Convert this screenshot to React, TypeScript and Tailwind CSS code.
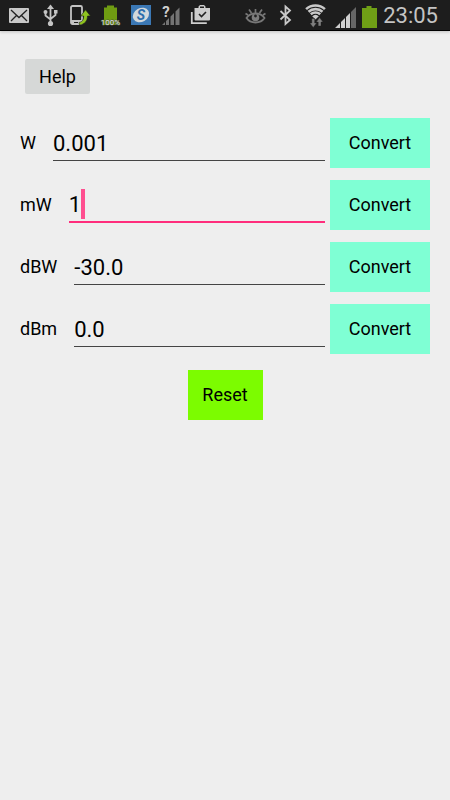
import { useState } from "react";
import type { ReactNode } from "react";

type Unit = "W" | "mW" | "dBW" | "dBm";

const UNITS: Unit[] = ["W", "mW", "dBW", "dBm"];

const EMPTY: Record<Unit, string> = { W: "", mW: "", dBW: "", dBm: "" };

function toWatts(unit: Unit, value: number) {
  if (unit === "W") return value;
  if (unit === "mW") return value / 1000;
  if (unit === "dBW") return 10 ** (value / 10);
  return 10 ** ((value - 30) / 10);
}

function format(value: number) {
  const rounded = Number(value.toPrecision(8));
  return Number.isInteger(rounded) ? rounded.toFixed(1) : String(rounded);
}

function StatusIcon({ label, children }: { label: string; children: ReactNode }) {
  return (
    <svg
      role="img"
      aria-label={label}
      viewBox="0 0 20 30"
      className="h-[30px] w-5 shrink-0 overflow-visible"
    >
      {children}
    </svg>
  );
}

function StatusBar() {
  return (
    <header className="flex h-[31px] items-start justify-between border-b border-black bg-[#1d1d1d] pr-3 pl-[10px] font-[Roboto,sans-serif] shadow-[0_1px_3px_rgba(0,0,0,0.2)]">
      <div className="flex gap-[10px]">
        <StatusIcon label="Mail">
          <rect x="-1" y="8" width="20" height="15" rx="1" fill="#c9c9c9" />
          <path
            d="M1 10l8 7.5 8-7.5M1 21l5.5-5.5M17 21l-5.5-5.5"
            fill="none"
            stroke="#222"
            strokeWidth="1.3"
          />
        </StatusIcon>
        <StatusIcon label="USB">
          <path
            d="M10.5 8v15M5.5 12v3.5l5 4M15.5 12v3l-5 4"
            fill="none"
            stroke="#c4c4c4"
            strokeWidth="1.8"
          />
          <path d="M10.5 4.5l3.500 4.5h-7z" fill="#c4c4c4" />
          <circle cx="5.5" cy="12" r="2" fill="#c4c4c4" />
          <rect x="14" y="10" width="3.5" height="3.5" fill="#c4c4c4" />
          <circle cx="10.5" cy="23.5" r="2.6" fill="#c4c4c4" />
        </StatusIcon>
        <StatusIcon label="Phone update">
          <rect x="1" y="6" width="11" height="18" rx="1.5" fill="none" stroke="#c4c4c4" strokeWidth="1.8" />
          <path d="M1 21h11M1 23h3M8 23h4" stroke="#c4c4c4" strokeWidth="2" />
          <path
            d="M15.5 9.8l5 6.2h-3c0 5-3 8.5-8 9l-.5-2.5c3.5-.5 4.7-3 4.7-6.5h-3z"
            fill="#8fc31f"
            stroke="#1d1d1d"
            strokeWidth=".6"
          />
        </StatusIcon>
        <StatusIcon label="Battery full">
          <path d="M4 7.5h3V5.5h7v2h3V25H4z" fill="#6f9c12" />
          <text
            x="10.5"
            y="25"
            textAnchor="middle"
            fontSize="8"
            fill="#e8e8e8"
            stroke="#4a5a30"
            strokeWidth="1"
            paintOrder="stroke"
          >
            100%
          </text>
        </StatusIcon>
        <StatusIcon label="Sync app">
          <rect x="1" y="5" width="20" height="20" fill="#3b78b5" />
          <ellipse cx="11" cy="15" rx="8.5" ry="6.8" transform="rotate(-30 11 15)" fill="#d2d8dc" />
          <text
            x="11"
            y="20"
            textAnchor="middle"
            fontSize="14"
            fontWeight="700"
            fontStyle="italic"
            fill="#2c6eac"
          >
            S
          </text>
        </StatusIcon>
        <StatusIcon label="Second SIM signal unknown">
          <path
            d="M2 25l3-3v3zM6 25v-4l3-3v7zM10.5 25v-8.5l3.5-3.500v12zM15.5 25V11.5l4-4V25z"
            fill="#747474"
          />
          <text
            x="6"
            y="17"
            textAnchor="middle"
            fontSize="15"
            fontWeight="700"
            fill="#d0d0d0"
            stroke="#1d1d1d"
            strokeWidth="1"
            paintOrder="stroke"
          >
            ?
          </text>
        </StatusIcon>
        <StatusIcon label="Apps updated">
          <path d="M1.8 12v11.2h15" fill="none" stroke="#cecece" strokeWidth="1.8" />
          <path
            fillRule="evenodd"
            d="M4.5 8h4V6.500L10 5h4l1.5 1.500V8H20v11.5a1 1 0 0 1-1 1H5.5a1 1 0 0 1-1-1zM10 8h4V6.500h-4z"
            fill="#cecece"
          />
          <path d="M9 14l2.500 2.500 4.500-4.500" fill="none" stroke="#222" strokeWidth="1.6" />
        </StatusIcon>
      </div>

      <div className="flex gap-[10px]">
        <StatusIcon label="Smart stay">
          <path
            d="M1.500 18c4-6 14-6 18 0c-4 6-14 6-18 0z"
            fill="none"
            stroke="#777"
            strokeWidth="1.8"
          />
          <circle cx="10.5" cy="17.5" r="3.8" fill="#7d7d7d" />
          <circle cx="10.5" cy="16" r="1.4" fill="#222" />
          <path
            d="M10.5 9v4M4 9.500l2.500 3.500M17 9.500l-2.500 3.500M.5 13.500l2.500 1.500M20.5 13.500l-2.500 1.500"
            stroke="#777"
            strokeWidth="1.7"
          />
        </StatusIcon>
        <StatusIcon label="Bluetooth">
          <path
            d="M5.500 11l9.500 9-4.500 4V6.500l4.500 4-9.500 9"
            fill="none"
            stroke="#c9c9c9"
            strokeWidth="1.8"
          />
        </StatusIcon>
        <StatusIcon label="Wi-Fi">
          <path
            d="M1.100 9.100a14 14 0 0 1 18.800 0M3.500 11.800a10.400 10.400 0 0 1 14 0M5.800 14.300a7 7 0 0 1 9.400 0"
            fill="none"
            stroke="#c9c9c9"
            strokeWidth="2.6"
          />
          <path d="M7.200 16.200a4.800 4.800 0 0 1 6.600 0L10.5 19.500z" fill="#c9c9c9" />
          <path
            d="M6.800 18.500h2.900V23h2l-3.500 4.500L4.800 23h2zM13.200 26V22h-2l3.400-4.500 3.400 4.500h-2v4z"
            fill="#808080"
            stroke="#1d1d1d"
            strokeWidth=".4"
          />
        </StatusIcon>
        <div className="flex items-center gap-[6px]">
          <StatusIcon label="Mobile signal">
            <path d="M0 27l5-5v5zM6 27v-6l4-4v10zM11 27V16l4-4v15z" fill="#cfcfcf" />
            <path d="M16 27V11l5-5v21z" fill="#666" />
          </StatusIcon>
          <svg
            role="img"
            aria-label="Battery"
            viewBox="0 0 16 30"
            className="h-[30px] w-4 shrink-0"
          >
            <path d="M1 7h4.500V5h5v2H16v20H1z" fill="#6f9f16" />
          </svg>
          <time className="text-[22px] leading-8 text-[#c4c4c4]">23:05</time>
        </div>
      </div>
    </header>
  );
}

type UnitRowProps = {
  unit: Unit;
  value: string;
  active: boolean;
  onFocus: () => void;
  onChange: (value: string) => void;
  onConvert: () => void;
};

function UnitRow({ unit, value, active, onFocus, onChange, onConvert }: UnitRowProps) {
  return (
    <div className="flex items-center">
      <label htmlFor={unit} className="mr-[17px] text-lg">
        {unit}
      </label>
      <div className="relative mr-[5px] min-w-0 flex-1 text-[22px]">
        <input
          id={unit}
          type="text"
          inputMode="decimal"
          value={value}
          onFocus={onFocus}
          onChange={(e) => onChange(e.target.value)}
          className={`block h-9 w-full bg-transparent pt-px caret-transparent outline-none ${
            active ? "border-b-2 border-[#ff2d7c]" : "border-b border-[#444]"
          }`}
        />
        {active && (
          <span
            className="absolute top-[2px] h-[30px] w-1 bg-[#ff4f90]"
            style={{ left: `${value.length}ch` }}
          />
        )}
      </div>
      <button
        type="button"
        onClick={onConvert}
        className="h-[50px] w-[100px] bg-[#7fffd4] text-lg"
      >
        Convert
      </button>
    </div>
  );
}

export default function App() {
  const [values, setValues] = useState<Record<Unit, string>>({
    W: "0.001",
    mW: "1",
    dBW: "-30.0",
    dBm: "0.0",
  });
  const [active, setActive] = useState<Unit>("mW");

  function convert(unit: Unit) {
    const watts = toWatts(unit, parseFloat(values[unit]));
    if (Number.isNaN(watts)) return;
    const dbw = 10 * Math.log10(watts);
    setValues({
      W: format(watts),
      mW: format(watts * 1000),
      dBW: format(dbw),
      dBm: format(dbw + 30),
      [unit]: values[unit],
    });
  }

  return (
    <div className="min-h-screen bg-[#eee] font-[Roboto,sans-serif] text-black">
      <StatusBar />
      <main className="px-5 pt-7">
        <button
          type="button"
          className="ml-[5px] block h-[35px] w-[65px] rounded-xs bg-[#d6d8d7] text-lg"
        >
          Help
        </button>

        <div className="mt-6 flex flex-col gap-3">
          {UNITS.map((unit) => (
            <UnitRow
              key={unit}
              unit={unit}
              value={values[unit]}
              active={active === unit}
              onFocus={() => setActive(unit)}
              onChange={(value) => setValues({ ...values, [unit]: value })}
              onConvert={() => convert(unit)}
            />
          ))}
        </div>

        <button
          type="button"
          onClick={() => setValues(EMPTY)}
          className="mx-auto mt-4 block h-[50px] w-[75px] bg-[#7cfc00] text-lg"
        >
          Reset
        </button>
      </main>
    </div>
  );
}
